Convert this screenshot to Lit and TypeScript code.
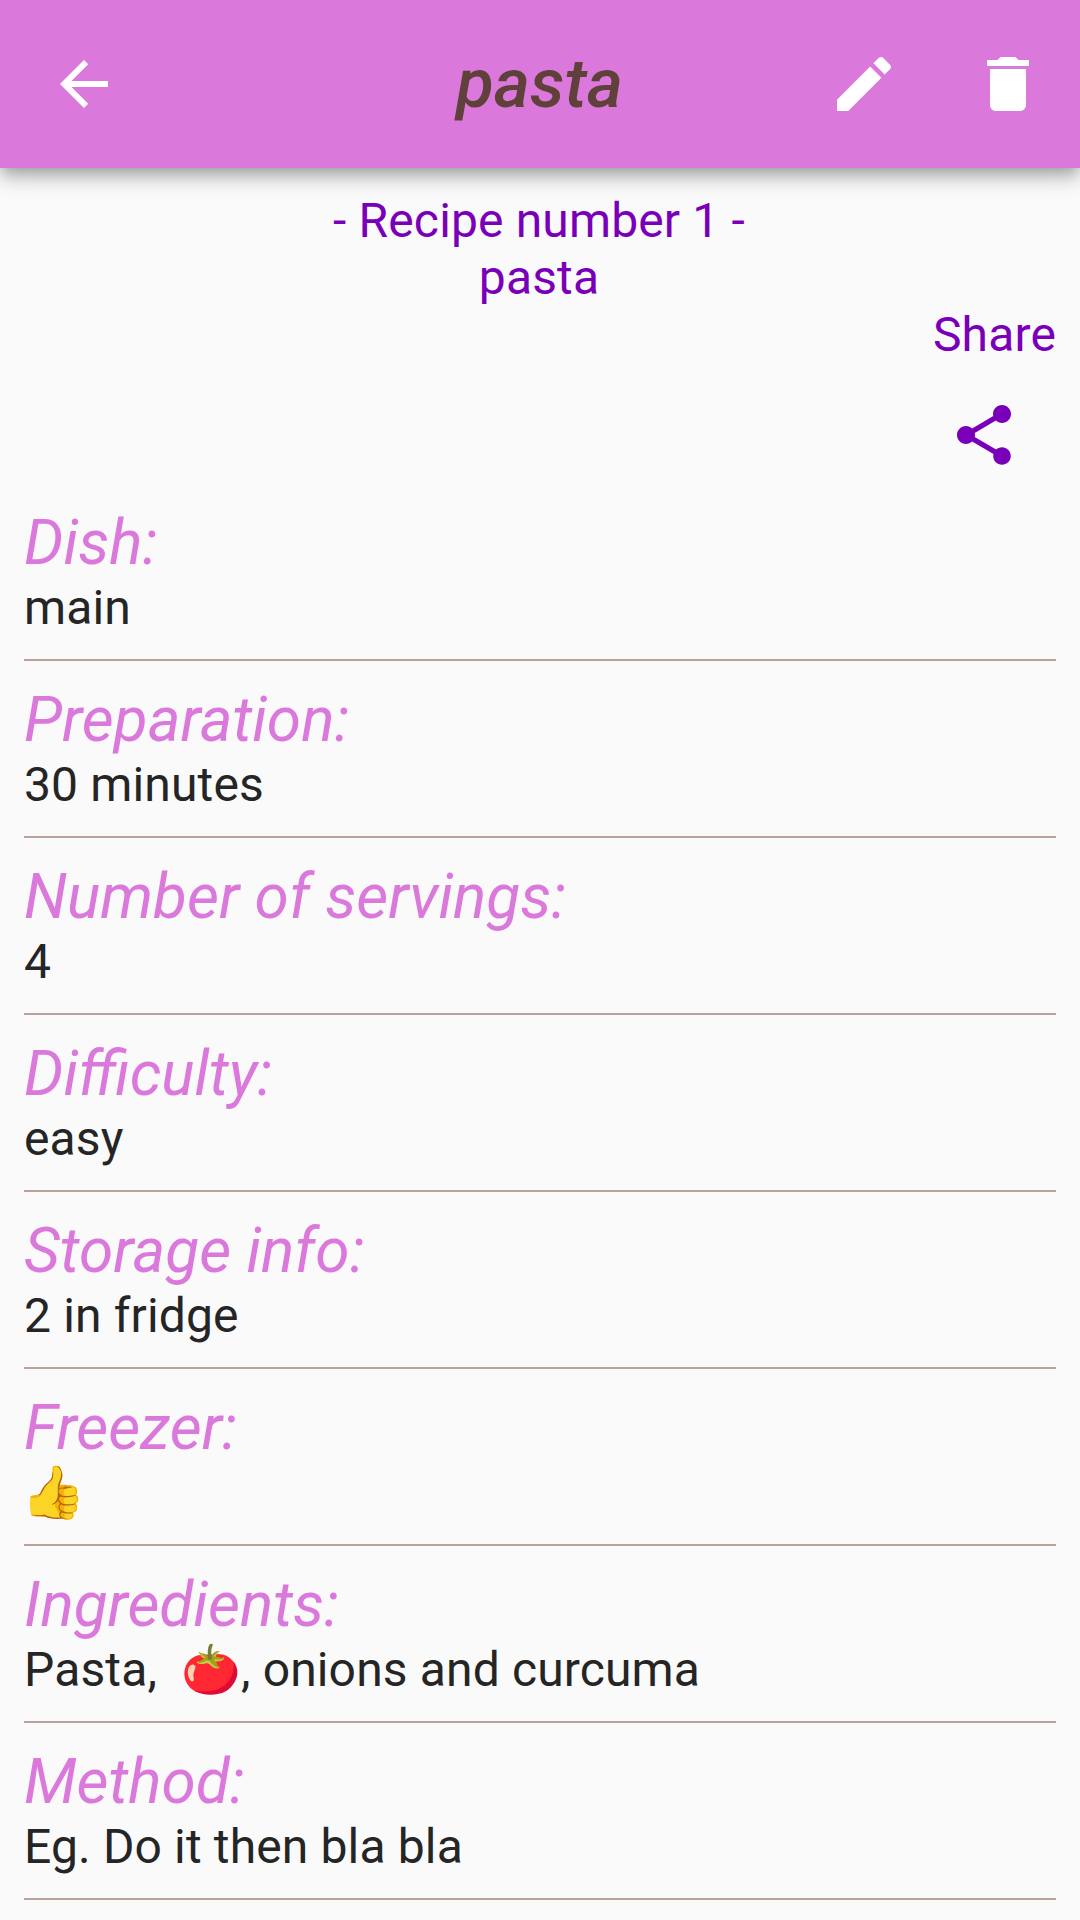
import { LitElement, html, css, svg } from "lit";
import { customElement } from "lit/decorators.js";

const icon = (d: string) => html`<svg class="icon" viewBox="0 0 24 24" aria-hidden="true">${svg`<path d=${d} fill="currentColor"></path>`}</svg>`;

const ICONS = {
  back: "M20 11H7.83l5.59-5.59L12 4l-8 8 8 8 1.41-1.41L7.83 13H20v-2z",
  edit: "M3 17.25V21h3.75L17.81 9.94l-3.75-3.75L3 17.25zM20.71 7.04c.39-.39.39-1.02 0-1.41l-2.34-2.34c-.39-.39-1.02-.39-1.41 0l-1.83 1.83 3.75 3.75 1.83-1.83z",
  trash: "M6 19c0 1.1.9 2 2 2h8c1.1 0 2-.9 2-2V7H6v12zM19 4h-3.5l-1-1h-5l-1 1H5v2h14V4z",
  share: "M18 16.08c-.76 0-1.44.3-1.96.77L8.91 12.7c.05-.23.09-.46.09-.7s-.04-.47-.09-.7l7.05-4.11c.54.5 1.25.81 2.04.81 1.66 0 3-1.34 3-3s-1.34-3-3-3-3 1.34-3 3c0 .24.04.47.09.7L8.04 9.81C7.5 9.31 6.79 9 6 9c-1.66 0-3 1.34-3 3s1.34 3 3 3c.79 0 1.5-.31 2.04-.81l7.12 4.16c-.05.21-.08.43-.08.65 0 1.61 1.31 2.92 2.92 2.92 1.61 0 2.92-1.31 2.92-2.92s-1.31-2.92-2.92-2.92z",
};

const SECTIONS: [string, unknown][] = [
  ["Dish:", "main"],
  ["Preparation:", "30 minutes"],
  ["Number of servings:", "4"],
  ["Difficulty:", "easy"],
  ["Storage info:", "2 in fridge"],
  ["Freezer:", html`<span class="thumb">👍</span>`],
  ["Ingredients:", html`Pasta,  <span class="tomato">🍅</span>, onions and curcuma`],
  ["Method:", "Eg. Do it then bla bla"],
];

@customElement("app-root")
export class AppRoot extends LitElement {
  static styles = css`
    :host {
      display: block;
      height: 1920px;
      overflow: hidden;
      background: #fafafa;
      font-family: Roboto, "Noto Color Emoji", sans-serif;
      font-size: 48px;
      line-height: 57px;
      letter-spacing: 0.14px;
      color: #252525;
    }
    .bar {
      display: grid;
      grid-template-columns: 168px 1fr 144px 144px;
      align-items: center;
      height: 168px;
      background: #da79db;
      color: #fff;
      box-shadow: 0 6px 12px -3px rgba(0, 0, 0, 0.2), 0 12px 15px rgba(0, 0, 0, 0.14), 0 3px 30px rgba(0, 0, 0, 0.12);
    }
    .btn {
      display: flex;
      justify-content: center;
      align-items: center;
      width: 144px;
      height: 144px;
      padding: 0;
      border: 0;
      background: none;
      color: inherit;
    }
    .back { width: 168px; }
    .icon { display: block; width: 72px; height: 72px; }
    .title {
      margin: 0;
      padding-left: 119px;
      text-align: center;
      font-size: 69px;
      line-height: 80px;
      font-weight: 500;
      font-style: italic;
      letter-spacing: 0;
      color: #60403a;
    }
    .page { padding: 24px; }
    .intro { padding-right: 2px; text-align: center; color: #7900b8; }
    .share { display: flex; flex-direction: column; align-items: flex-end; color: #7900b8; }
    .section { display: flex; flex-direction: column; height: 177px; }
    .label {
      margin: 0;
      font-size: 62.15px;
      line-height: 72px;
      font-weight: 400;
      font-style: italic;
      letter-spacing: 0;
      color: #da79db;
    }
    .value { white-space: pre; height: 57px; }
    .thumb { display: inline-block; transform: scale(1.08); filter: hue-rotate(4deg) brightness(1.03); }
    .tomato { display: inline-block; height: 57px; filter: hue-rotate(-5deg); }
    .rule { height: 2px; margin-top: 23px; background: #b8a29c; }
  `;

  render() {
    return html`
      <header class="bar">
        <button class="btn back" aria-label="Back">${icon(ICONS.back)}</button>
        <h1 class="title">pasta</h1>
        <button class="btn" aria-label="Edit">${icon(ICONS.edit)}</button>
        <button class="btn" aria-label="Delete">${icon(ICONS.trash)}</button>
      </header>
      <main class="page">
        <div class="intro">- Recipe number 1 -<br />pasta</div>
        <div class="share">
          <span>Share</span>
          <button class="btn" aria-label="Share">${icon(ICONS.share)}</button>
        </div>
        ${SECTIONS.map(
          ([label, value]) => html`<section class="section">
            <h2 class="label">${label}</h2>
            <div class="value">${value}</div>
            <div class="rule"></div>
          </section>`
        )}
      </main>
    `;
  }
}
